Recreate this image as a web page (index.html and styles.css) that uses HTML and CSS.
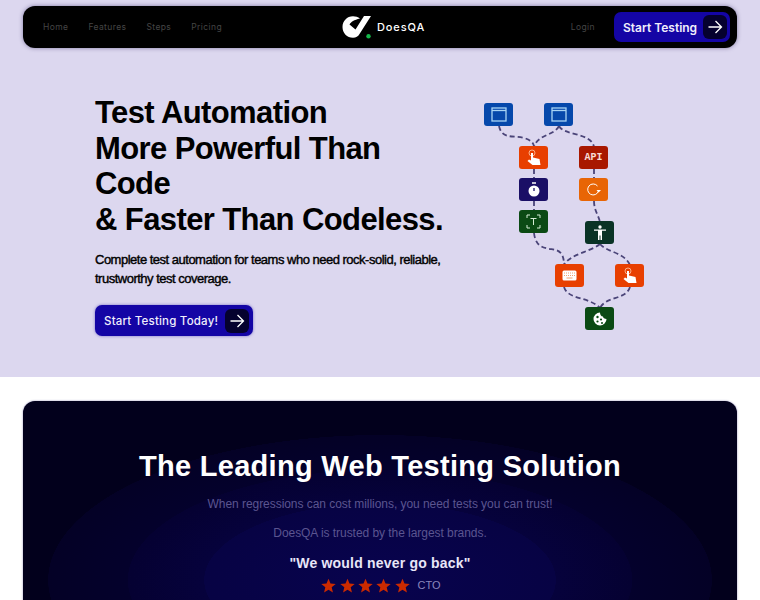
FILE: index.html
```html
<!DOCTYPE html>
<html lang="en">
<head>
    <meta charset="UTF-8">
    <meta name="viewport" content="width=device-width, initial-scale=1.0">
    <title>DoesQA</title>
    <link rel="stylesheet" href="styles.css">
</head>
<body>

    <div class="hero">
        <nav class="nav">
            <div class="nav-links">
                <a href="#">Home</a>
                <a href="#">Features</a>
                <a href="#">Steps</a>
                <a href="#">Pricing</a>
            </div>
            <a href="#" class="logo">
                <svg width="30" height="24" viewBox="0 0 30 24">
                    <path d="M18 3.500C16 2 13.500 1.200 11 1.200C5 1.200 .5 6 .5 12C.5 18 5 22.800 11 22.800C14 22.800 16 21.500 17.500 19L29 1H22L13.500 14.500L7.500 9.500C9 7 12 4.800 18 3.500Z" fill="#fff"/>
                    <circle cx="26.500" cy="21.200" r="2.200" fill="#14b84a"/>
                </svg>
                <span>DoesQA</span>
            </a>
            <div class="nav-right">
                <a href="#" class="login">Login</a>
                <a href="#" class="btn btn-nav">
                    Start Testing
                    <span class="btn-arrow">
                        <svg width="16" height="16" viewBox="0 0 16 16"><path d="M1.500 8H14M8.500 2L14.500 8L8.500 14" fill="none" stroke="#fff" stroke-width="1.300"/></svg>
                    </span>
                </a>
            </div>
        </nav>

        <div class="hero-body">
            <div class="hero-text">
                <h1>Test Automation<br>More Powerful Than Code<br>&amp; Faster Than Codeless.</h1>
                <p>Complete test automation for teams who need rock-solid, reliable, trustworthy test coverage.</p>
                <a href="#" class="btn btn-hero">
                    Start Testing Today!
                    <span class="btn-arrow">
                        <svg width="16" height="16" viewBox="0 0 16 16"><path d="M1.500 8H14M8.500 2L14.500 8L8.500 14" fill="none" stroke="#fff" stroke-width="1.300"/></svg>
                    </span>
                </a>
            </div>

            <div class="flow">
                <svg class="flow-lines" width="170" height="236" viewBox="0 0 170 236">
                    <g fill="none" stroke="#4a4478" stroke-width="1.800" stroke-dasharray="5 3">
                        <path d="M15 24C18 38 30 33 40 36C47 38 50 41 50 45"/>
                        <path d="M75 24C70 34 54 32 50 45"/>
                        <path d="M75 24C80 34 107 30 110 45"/>
                        <path d="M50 67V77"/>
                        <path d="M110 67V77"/>
                        <path d="M50 99V109"/>
                        <path d="M110 99C110 108 114 112 116 120"/>
                        <path d="M50 131C52 148 64 146 72 148C78 150 80 155 80 163"/>
                        <path d="M116 142C106 150 86 152 80 163"/>
                        <path d="M116 142C122 150 140 150 146 163"/>
                        <path d="M80 185C84 198 104 194 116 206"/>
                        <path d="M146 185C142 198 122 194 116 206"/>
                    </g>
                </svg>
                <div class="node blue n1"><svg width="16" height="15" viewBox="0 0 16 15"><rect x="1" y="1" width="14" height="13" fill="none" stroke="#a8d4f5" stroke-width="1.300"/><path d="M1 3.500H15" stroke="#a8d4f5" stroke-width="1.300"/></svg></div>
                <div class="node blue n2"><svg width="16" height="15" viewBox="0 0 16 15"><rect x="1" y="1" width="14" height="13" fill="none" stroke="#a8d4f5" stroke-width="1.300"/><path d="M1 3.500H15" stroke="#a8d4f5" stroke-width="1.300"/></svg></div>
                <div class="node red n3"><svg width="14" height="17" viewBox="0 0 14 17"><circle cx="5" cy="4" r="3" fill="none" stroke="#ffc9a8" stroke-width=".8"/><path d="M4 4H6V8.500L12.500 10L13.500 16H5.500L.5 12L2 10.500L4 11.500Z" fill="#fff"/></svg></div>
                <div class="node darkred n4"><span class="api">API</span></div>
                <div class="node navy n5"><svg width="12" height="15" viewBox="0 0 12 15"><circle cx="6" cy="9" r="5.500" fill="#fff"/><path d="M4 1H8" stroke="#fff" stroke-width="1.500"/><path d="M6 6V9" stroke="#1a0f66" stroke-width="1.300"/></svg></div>
                <div class="node orange n6"><svg width="15" height="14" viewBox="0 0 15 14"><path d="M11.500 3A5.500 5.500 0 1 0 12.500 8" fill="none" stroke="#fff" stroke-width="1"/><path d="M10.500 7H15L12.700 9.500Z" fill="#fff"/></svg></div>
                <div class="node green n7"><svg width="15" height="15" viewBox="0 0 15 15"><path d="M1 4V1H4M11 1H14V4M14 11V14H11M4 14H1V11" fill="none" stroke="#d5ecd5" stroke-width="1"/><path d="M4.500 4.500H10.500M7.500 4.500V11" fill="none" stroke="#d5ecd5" stroke-width="1"/></svg></div>
                <div class="node teal n8"><svg width="14" height="15" viewBox="0 0 14 15"><circle cx="7" cy="2" r="1.700" fill="#fff"/><path d="M1 4.500H13V5.800H9V15H7.500V10.500H6.500V15H5V5.800H1Z" fill="#fff"/></svg></div>
                <div class="node red n9"><svg width="15" height="11" viewBox="0 0 15 11"><rect x=".5" y=".5" width="14" height="10" rx="1.500" fill="#fff"/><path d="M2 3H13M2 5.500H13" stroke="#f0a070" stroke-width="1" stroke-dasharray="1 1"/><path d="M4.500 8H10.500" stroke="#f0a070" stroke-width="1"/></svg></div>
                <div class="node red n10"><svg width="14" height="17" viewBox="0 0 14 17"><circle cx="5" cy="4" r="3" fill="none" stroke="#ffc9a8" stroke-width=".8"/><path d="M4 4H6V8.500L12.500 10L13.500 16H5.500L.5 12L2 10.500L4 11.500Z" fill="#fff"/></svg></div>
                <div class="node green n11"><svg width="14" height="14" viewBox="0 0 14 14"><path d="M7 .5A6.500 6.500 0 1 0 13.500 7C11.500 7 10 6 10 4.500C8 4.500 7 2.500 7 .5Z" fill="#fff"/><circle cx="4.500" cy="5" r="1.200" fill="#0b4a14"/><circle cx="8" cy="7.500" r="1.100" fill="#0b4a14"/><circle cx="4.500" cy="9.500" r="1.100" fill="#0b4a14"/><circle cx="9" cy="11" r="1" fill="#0b4a14"/></svg></div>
            </div>
        </div>
    </div>

    <div class="leading">
        <div class="card">
            <h2>The Leading Web Testing Solution</h2>
            <p class="sub">When regressions can cost millions, you need tests you can trust!</p>
            <p class="sub">DoesQA is trusted by the largest brands.</p>
            <div class="quote">"We would never go back"</div>
            <div class="rating">
                <div class="stars">
                    <svg width="15" height="15" viewBox="0 0 24 24"><path d="M12 1L15.200 8.800L23.500 9.400L17.100 14.800L19.100 23L12 18.600L4.900 23L6.900 14.800L.5 9.400L8.800 8.800Z"/></svg>
                    <svg width="15" height="15" viewBox="0 0 24 24"><path d="M12 1L15.200 8.800L23.500 9.400L17.100 14.800L19.100 23L12 18.600L4.900 23L6.900 14.800L.5 9.400L8.800 8.800Z"/></svg>
                    <svg width="15" height="15" viewBox="0 0 24 24"><path d="M12 1L15.200 8.800L23.500 9.400L17.100 14.800L19.100 23L12 18.600L4.900 23L6.900 14.800L.5 9.400L8.800 8.800Z"/></svg>
                    <svg width="15" height="15" viewBox="0 0 24 24"><path d="M12 1L15.200 8.800L23.500 9.400L17.100 14.800L19.100 23L12 18.600L4.900 23L6.900 14.800L.5 9.400L8.800 8.800Z"/></svg>
                    <svg width="15" height="15" viewBox="0 0 24 24"><path d="M12 1L15.200 8.800L23.500 9.400L17.100 14.800L19.100 23L12 18.600L4.900 23L6.900 14.800L.5 9.400L8.800 8.800Z"/></svg>
                </div>
                <span class="who">CTO</span>
            </div>
        </div>
    </div>

</body>
</html>
```

FILE: styles.css
```css
body {
    font-family: 'Liberation Sans', Arial, sans-serif;
    background-color: white;
    margin: 0;
    padding: 0;
    overflow: hidden;
    height: 600px;
}

a {
    text-decoration: none;
}

.hero {
    background-color: #dcd7ef;
    height: 377px;
    padding: 6px 23px 0;
    box-sizing: border-box;
}

.nav {
    background-color: black;
    border-radius: 12px;
    height: 42px;
    padding: 0 7px 0 20px;
    display: flex;
    align-items: center;
    justify-content: space-between;
    box-shadow: 0 0 4px rgba(40, 30, 90, 0.5);
}

.nav-links {
    display: flex;
    gap: 20px;
    width: 258px;
}

.nav-links a,
.login {
    font-family: 'Inter', sans-serif;
    font-size: 8.500px;
    letter-spacing: 0.4px;
    color: #454545;
}

.logo {
    display: flex;
    align-items: center;
    gap: 5px;
    color: white;
    font-family: 'Inter', sans-serif;
    font-size: 11px;
    font-weight: 500;
    letter-spacing: 0.9px;
}

.nav-right {
    display: flex;
    align-items: center;
    gap: 19px;
    width: 264px;
    justify-content: flex-end;
}

.btn {
    display: inline-flex;
    align-items: center;
    justify-content: space-between;
    background-color: #1405a5;
    color: #f0eefc;
    font-family: 'Inter', sans-serif;
    font-weight: 600;
    border-radius: 7px;
    box-sizing: border-box;
    white-space: nowrap;
}

.btn-arrow {
    display: flex;
    align-items: center;
    justify-content: center;
    background-color: #05012e;
    border-radius: 6px;
    width: 24px;
    height: 24px;
}

.btn-nav {
    width: 116px;
    height: 30px;
    font-size: 12px;
    padding: 0 3px 0 9px;
}

.hero-body {
    display: flex;
    padding-left: 72px;
    padding-top: 47px;
}

.hero-text {
    width: 352px;
}

h1 {
    margin: 0;
    color: black;
    font-size: 31px;
    line-height: 35.500px;
    font-weight: bold;
    letter-spacing: -0.600px;
}

.hero-text p {
    margin: 13px 0 0;
    color: black;
    font-size: 13px;
    line-height: 19px;
    letter-spacing: -0.5px;
    -webkit-text-stroke: 0.4px black;
}

.btn-hero {
    width: 158px;
    height: 31px;
    margin-top: 17px;
    font-size: 11.500px;
    font-weight: 500;
    letter-spacing: 0.2px;
    padding: 0 4px 0 9px;
    box-shadow: 0 0 3px rgba(20, 5, 165, 0.5);
}

.flow {
    position: relative;
    width: 170px;
    height: 236px;
    margin-left: 37px;
    margin-top: 7px;
}

.flow-lines {
    position: absolute;
    left: 0;
    top: 0;
}

.node {
    position: absolute;
    width: 29px;
    height: 23px;
    border-radius: 3px;
    display: flex;
    align-items: center;
    justify-content: center;
}

.blue { background-color: #0648ab; }
.red { background-color: #e83f00; }
.darkred { background-color: #a81800; }
.navy { background-color: #1a0f66; }
.orange { background-color: #e86505; }
.green { background-color: #0b4a14; }
.teal { background-color: #0a3326; }

.n1 { left: 0; top: 1px; }
.n2 { left: 60px; top: 1px; }
.n3 { left: 35px; top: 44px; }
.n4 { left: 95px; top: 44px; }
.n5 { left: 35px; top: 76px; }
.n6 { left: 95px; top: 76px; }
.n7 { left: 35px; top: 108px; }
.n8 { left: 101px; top: 119px; }
.n9 { left: 71px; top: 162px; }
.n10 { left: 131px; top: 162px; }
.n11 { left: 101px; top: 205px; }

.api {
    font-family: 'Liberation Mono', monospace;
    font-size: 10px;
    font-weight: bold;
    color: #f8dcd4;
}

.leading {
    padding: 24px 23px 0;
}

.card {
    background: radial-gradient(ellipse 332px 145px at 50% 179px, #08034e 0%, #070344 52.900%, #06023c 53%, #050132 75.900%, #04012c 76%, #040126 99.900%, #02001c 100%);
    background-color: #02001c;
    border-radius: 12px;
    height: 300px;
    box-shadow: 0 0 2px rgba(60, 50, 130, 0.6);
    padding-top: 47px;
    box-sizing: border-box;
    text-align: center;
}

h2 {
    margin: 0;
    color: white;
    font-size: 29px;
    line-height: 36px;
    font-weight: bold;
    letter-spacing: 0.3px;
}

.sub {
    margin: 0;
    color: #5b5590;
    font-size: 12px;
    line-height: 16px;
    letter-spacing: -0.05px;
    margin-top: 13px;
}

.sub:first-of-type {
    margin-top: 12px;
}

.quote {
    color: #e8e6f8;
    font-size: 14px;
    line-height: 18px;
    font-weight: bold;
    margin-top: 13px;
    letter-spacing: 0.2px;
}

.rating {
    display: flex;
    justify-content: center;
    align-items: center;
    gap: 8px;
    margin-top: 4px;
    padding-left: 2px;
}

.stars {
    display: flex;
    gap: 3.300px;
    fill: #cc2a00;
    padding-top: 2px;
}

.who {
    color: #8a86bb;
    font-size: 11px;
}
```
